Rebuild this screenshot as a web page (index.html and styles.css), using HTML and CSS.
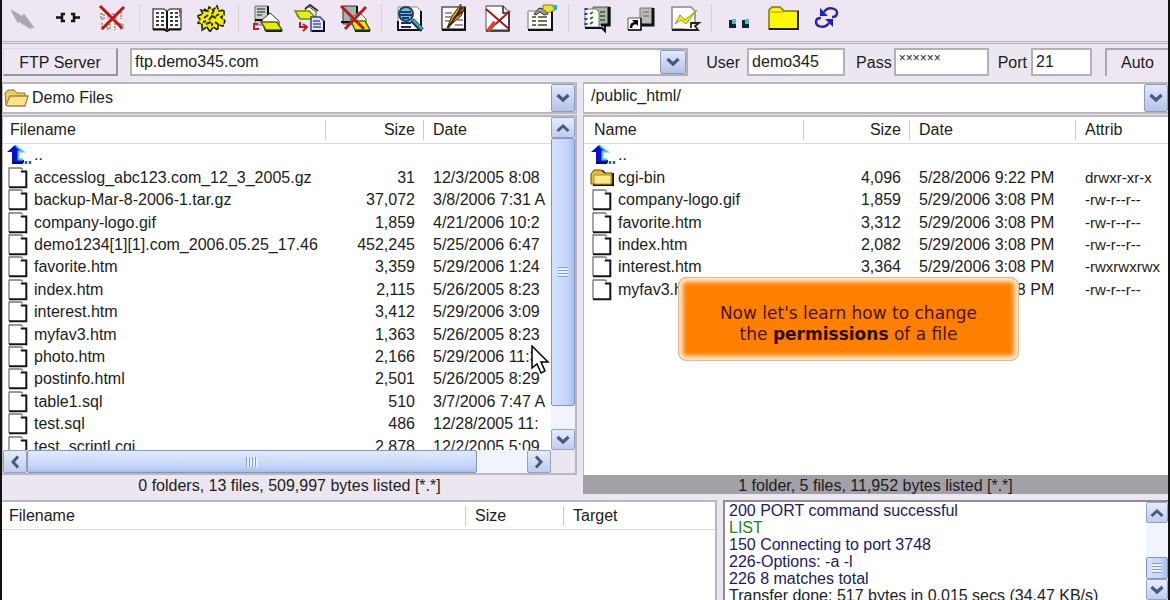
FILE: index.html
```html
<!DOCTYPE html>
<html lang="en">
<head>
<meta charset="utf-8">
<title>FTP Client</title>
<link rel="stylesheet" href="styles.css">
</head>
<body>
<svg class="defs" aria-hidden="true">
  <symbol id="down" viewBox="0 0 14 10"><path d="M1.500 2l5.500 5 5.500-5" fill="none" stroke="#48597f" stroke-width="3.200"/></symbol>
  <symbol id="up" viewBox="0 0 14 10"><path d="M1.500 8L7 3l5.500 5" fill="none" stroke="#48597f" stroke-width="3"/></symbol>
  <symbol id="left" viewBox="0 0 10 14"><path d="M8 1.500L3 7l5 5.500" fill="none" stroke="#48597f" stroke-width="3"/></symbol>
  <symbol id="right" viewBox="0 0 10 14"><path d="M2 1.500L7 7l-5 5.500" fill="none" stroke="#48597f" stroke-width="3"/></symbol>
  <symbol id="file" viewBox="0 0 24 22"><path d="M2 21V1h12l5 4v15z" fill="#fff"/><path d="M2 20V1h12l2 1.500" fill="none" stroke="#777" stroke-width="1.300"/><path d="M2 20.300h17.300V4.500h-5.500" fill="none" stroke="#151515" stroke-width="2"/></symbol>
  <symbol id="parent" viewBox="0 0 26 22"><path d="M9 1l8 7h-4v8h5v3H6V8H1z" fill="#0a10c8"/><path d="M10 2l7 5.500h-4.500v8H17" fill="none" stroke="#53c4e6" stroke-width="2"/><path d="M6 19h11" stroke="#001060" stroke-width="2"/><path d="M20 17v3m4-3v3" stroke="#276a9c" stroke-width="2.500"/></symbol>
  <symbol id="folder" viewBox="0 0 26 22"><path d="M3 19V7l3-4h7l3 3h8v13z" fill="#181000"/><path d="M1 17V7l3-4h7l3 3h8v11z" fill="#e7b93c" stroke="#6b4b08"/><path d="M4 17V8h17v9z" fill="#ffe78c" stroke="#b68924"/></symbol>
  <symbol id="openfolder" viewBox="0 0 26 22"><path d="M2 18L1 6l3-3h6l3 3h8v4" fill="#e9cc6a" stroke="#94731f"/><path d="M2 18L6 9h18l-3 10H4z" fill="#fbe391" stroke="#a8832c" stroke-width="1.300"/></symbol>
</svg>

<header class="toolbar" aria-label="Tools">
  <button aria-label="Quick connect"><svg viewBox="0 0 32 32"><path d="M4 9l10 6 2-2 9 12-4-1 1 2-11-7-1 1z" fill="#aaa6b3" stroke="#aaa6b3" stroke-width="1.500"/></svg></button>
  <button aria-label="Disconnect"><svg viewBox="0 0 32 32"><path d="M4 15.500h5m14 0h5" stroke="#111" stroke-width="2.500"/><path d="M13 12h-3v7h3M19 12h3v7h-3" fill="none" stroke="#111" stroke-width="2.500"/></svg></button>
  <button aria-label="Abort"><svg viewBox="0 0 32 32"><g fill="none" stroke="#8b9860" stroke-width="1.500" stroke-dasharray="2 1"><path d="M5 12h3v5H5zM12 10v7M17 12h3v5h-3zM25 10v7M6 21v7M11 22h3v5h-3zM19 21v7M24 22h3v5h-3z"/></g><path d="M4 4l22 22M28 5L6 27" stroke="#bd1518" stroke-width="3"/></svg></button>
  <i class="sep"></i>
  <button aria-label="Address book"><svg viewBox="0 0 32 32"><path d="M2 7h11l3 2 3-2h11v20H18l-2 2-2-2H2z" fill="#fff" stroke="#555" stroke-width="1.500"/><path d="M16 9v18M2 27.500h11l3 1.500 3-1.500h11" stroke="#111" stroke-width="2" fill="none"/><path d="M5 11h3m2 0h3M5 15h3m2 0h3M5 19h3m2 0h3M5 23h3m2 0h3M19 11h3m2 0h3M19 15h3m2 0h3M19 19h3m2 0h3M19 23h3m2 0h3" stroke="#363f46" stroke-width="2"/><path d="M29 8v3" stroke="#d23535" stroke-width="2"/><path d="M29 12v3" stroke="#3488bb" stroke-width="2"/></svg></button>
  <button aria-label="Preferences"><svg viewBox="0 0 32 32"><path d="M9 7l4 2 1-4 4 3 4-4 2 5 5-1v5l-3 2 4 4-2 5-5-1v5l-5-3-3 5-3-5-5 3v-6l-4-1 2-4-3-3 6-2-2-4 5 1z" fill="#f0ee08" stroke="#222200" stroke-width="1.600" stroke-dasharray="5 1"/><path d="M9 16l4-3M14 18l3-4 4 2M11 22l5-2M20 20l4 3M19 8l-2 4M24 12l-3 2M8 20l3-1M17 24v-3" stroke="#333300" stroke-width="2" fill="none"/></svg></button>
  <i class="sep"></i>
  <button aria-label="Upload"><svg viewBox="0 0 32 32"><path d="M5 4h13v19H5z" fill="#c9ccc8" stroke="#777"/><path d="M18 4v14M5 18h8" stroke="#111" stroke-width="2"/><path d="M7 7h8M7 10h8M7 13h5" stroke="#4b665e" stroke-width="1.500"/><path d="M12 18l8-7 9 8v10H15z" fill="#fff" stroke="#333"/><path d="M11 20h16l5 8H16z" fill="#e8e90d" stroke="#58621a" stroke-width="1.500"/><path d="M16 29h16" stroke="#152b09" stroke-width="2"/><path d="M8 22H4v5h5" fill="none" stroke="#ca1c25" stroke-width="2"/></svg></button>
  <button aria-label="Download"><svg viewBox="0 0 32 32"><path d="M4 15l-2-5 7 1 5-7 8 6v5z" fill="#fff" stroke="#4a5910"/><path d="M1 9h14l8 8H6z" fill="#e6ed20" stroke="#7c8411" stroke-width="1.500"/><path d="M11 7l5-4 8 6" fill="none" stroke="#333" stroke-width="2"/><path d="M17 15h9l4 4v10H17z" fill="#e1e4ff" stroke="#38447a" stroke-width="1.500"/><path d="M19 19h7m-7 3h8m-8 3h8" stroke="#4450a0" stroke-width="1.500"/><path d="M30 19v10H18" fill="none" stroke="#111" stroke-width="2"/><path d="M6 20v5h6m-3-3l4 3-4 4" fill="none" stroke="#b42020" stroke-width="2"/></svg></button>
  <button aria-label="Cancel transfer"><svg viewBox="0 0 32 32"><path d="M5 4h14v18H5z" fill="#9fb5ae" stroke="#333"/><path d="M19 4v14M3 20h10" stroke="#111" stroke-width="2"/><path d="M12 17l9-7 7 7v8z" fill="#fff" stroke="#555"/><path d="M13 19h14l5 9H17z" fill="#e8e80d" stroke="#58621a" stroke-width="1.500"/><path d="M17 29h15" stroke="#142f09" stroke-width="2"/><path d="M3 4l23 23M28 5L7 27" stroke="#b91c20" stroke-width="3"/></svg></button>
  <i class="sep"></i>
  <button aria-label="View"><svg viewBox="0 0 32 32"><path d="M5 5h19l4 4v19H5z" fill="#fff" stroke="#888"/><path d="M28 9v19H5v-9" fill="none" stroke="#111" stroke-width="2"/><path d="M8 17h8m-8 4h10m-10 4h10" stroke="#182a66" stroke-width="2"/><circle cx="13" cy="12" r="7" fill="#78bdd0" stroke="#17465c" stroke-width="2"/><path d="M7 10h11M7 13h12M9 16h7" stroke="#173a7c" stroke-width="2"/><path d="M19 18l10 10" stroke="#13323e" stroke-width="5"/><path d="M20 18l9 9" stroke="#30acb5" stroke-width="2.500"/></svg></button>
  <button aria-label="Edit"><svg viewBox="0 0 32 32"><path d="M5 5h23v22H5z" fill="#fff" stroke="#555" stroke-width="1.500"/><path d="M28 5v23H5" fill="none" stroke="#111" stroke-width="2"/><path d="M8 11h7m-7 4h6m-6 4h5m5 4h8M20 18h6" stroke="#777" stroke-width="1.500"/><path d="M10 26l5-12L24 2l-2 7 6-4-4 9-7 6z" fill="#d0aa20" stroke="#332500"/><path d="M11 26L25 5M17 16l9-7" stroke="#54181b" stroke-width="2"/></svg></button>
  <button aria-label="Delete"><svg viewBox="0 0 32 32"><path d="M5 4h17l6 6v18H5z" fill="#fff" stroke="#777" stroke-width="1.300"/><path d="M22 4v7h6M28 10v19H5" fill="none" stroke="#222" stroke-width="1.500"/><path d="M5 7l23 20M29 9L8 28" stroke="#aa1518" stroke-width="2"/><path d="M14 20l-7 9" stroke="#d5462b" stroke-width="4"/></svg></button>
  <button aria-label="Properties"><svg viewBox="0 0 32 32"><path d="M3 9h24v18H3z" fill="#fff" stroke="#777"/><path d="M27 9v19H3" fill="none" stroke="#111" stroke-width="2"/><path d="M7 15h4m2 0h9M7 19h4m2 0h9M7 23h4m2 0h9" stroke="#727263" stroke-width="2"/><path d="M9 12l5-6 5 1 4 5-4 1-4-3-4 3z" fill="#999" stroke="#333"/><path d="M18 3h10l2 5-7 3-5-4z" fill="#ece329" stroke="#85811a"/><path d="M27 3h5v5h-3z" fill="#36a9cc"/></svg></button>
  <i class="sep"></i>
  <button aria-label="Site log"><svg viewBox="0 0 32 32"><path d="M13 5h17v18H13z" fill="#aeb3ae" stroke="#555"/><path d="M29 5v18h-8" fill="none" stroke="#111" stroke-width="3"/><path d="M5 7h11l3 3v15H5z" fill="#fff" stroke="#777"/><path d="M5 26h17l3 3v-5" fill="none" stroke="#111" stroke-width="2"/><path d="M6 6v18" stroke="#283c90" stroke-width="3" stroke-dasharray="2 3"/><path d="M10 12l3-2m-3 7l3-2m-3 7l3-2" stroke="#526052" stroke-width="2"/><path d="M20 10h5m-5 4h5m-5 4h5" stroke="#4a7839" stroke-width="2"/></svg></button>
  <button aria-label="Shortcut"><svg viewBox="0 0 32 32"><path d="M16 6h13v17H16z" fill="#b9bab7" stroke="#777"/><path d="M29 6v17H17" fill="none" stroke="#111" stroke-width="3"/><path d="M19 10h6m-6 4h6" stroke="#666"/><path d="M4 16h13v12H4z" fill="#fff" stroke="#555"/><path d="M17 16v12H4" fill="none" stroke="#111" stroke-width="1.500"/><path d="M7 26c0-4 2-5 5-5" fill="none" stroke="#000" stroke-width="2.500"/><path d="M8 18h6v6z"/></svg></button>
  <button aria-label="Run script"><svg viewBox="0 0 32 32"><path d="M4 5h19l4 4v18H4z" fill="#fff" stroke="#888" stroke-width="1.500"/><path d="M4 28h26l-3-4 4-3h-8v5" fill="#fff" stroke="#222" stroke-width="1.800"/><path d="M7 22l5-9 5 5L29 8 18 22l-5-4z" fill="#eee91b" stroke="#99951a"/></svg></button>
  <i class="sep"></i>
  <button aria-label="Parent directory"><svg viewBox="0 0 32 32"><path d="M6 18h7v8H6zM19 18h7v8h-7z" fill="#082733"/><path d="M9 17h4v5H9zM22 17h4v5h-4z" fill="#52bfc5"/></svg></button>
  <button aria-label="New folder"><svg viewBox="0 0 32 32"><path d="M2 27V8l3-3h8l4 4h14v18z" fill="#fff700" stroke="#777321" stroke-width="1.500"/><path d="M31 9v18H2" fill="none" stroke="#222" stroke-width="2"/><path d="M4 10h13" stroke="#c9c235" stroke-width="2"/></svg></button>
  <button aria-label="Refresh"><svg viewBox="0 0 32 32"><path d="M13 10c4-6 13-4 13 1 0 3-2 4-5 4M18 21c-4 6-13 4-13-1 0-3 2-4 5-4" fill="none" stroke="#2d24a0" stroke-width="2.500"/><path d="M9 6v8h8zM22 25v-8h-8z" fill="#2020bd"/></svg></button>
</header>

<form class="connection">
  <button type="button" class="server">FTP Server</button>
  <div class="address"><input id="host" aria-label="Server address" value="ftp.demo345.com"><button type="button" class="drop" aria-label="Show servers"><svg><use href="#down"/></svg></button></div>
  <label for="user">User</label><input id="user" class="user" value="demo345">
  <label for="pass">Pass</label><input id="pass" class="pass" value="××××××">
  <label for="port">Port</label><input id="port" class="port" value="21">
  <button type="button" class="auto">Auto</button>
</form>

<main class="panes">
  <section class="pane local">
    <div class="combo"><svg class="icon"><use href="#openfolder"/></svg><select aria-label="Local folder"><option>Demo Files</option></select><span class="drop"><svg><use href="#down"/></svg></span></div>
    <div class="list scrolling">
      <div class="view">
        <table>
          <colgroup><col class="c-name"><col class="c-size"><col class="c-date"></colgroup>
          <thead><tr><th>Filename</th><th class="num">Size</th><th>Date</th></tr></thead>
          <tbody>
            <tr><td><svg class="icon"><use href="#parent"/></svg>..</td><td></td><td></td></tr>
            <tr><td><svg class="icon"><use href="#file"/></svg>accesslog_abc123.com_12_3_2005.gz</td><td class="num">31</td><td>12/3/2005 8:08</td></tr>
            <tr><td><svg class="icon"><use href="#file"/></svg>backup-Mar-8-2006-1.tar.gz</td><td class="num">37,072</td><td>3/8/2006 7:31 A</td></tr>
            <tr><td><svg class="icon"><use href="#file"/></svg>company-logo.gif</td><td class="num">1,859</td><td>4/21/2006 10:2</td></tr>
            <tr><td><svg class="icon"><use href="#file"/></svg>demo1234[1][1].com_2006.05.25_17.46</td><td class="num">452,245</td><td>5/25/2006 6:47</td></tr>
            <tr><td><svg class="icon"><use href="#file"/></svg>favorite.htm</td><td class="num">3,359</td><td>5/29/2006 1:24</td></tr>
            <tr><td><svg class="icon"><use href="#file"/></svg>index.htm</td><td class="num">2,115</td><td>5/26/2005 8:23</td></tr>
            <tr><td><svg class="icon"><use href="#file"/></svg>interest.htm</td><td class="num">3,412</td><td>5/29/2006 3:09</td></tr>
            <tr><td><svg class="icon"><use href="#file"/></svg>myfav3.htm</td><td class="num">1,363</td><td>5/26/2005 8:23</td></tr>
            <tr><td><svg class="icon"><use href="#file"/></svg>photo.htm</td><td class="num">2,166</td><td>5/29/2006 11:3</td></tr>
            <tr><td><svg class="icon"><use href="#file"/></svg>postinfo.html</td><td class="num">2,501</td><td>5/26/2005 8:29</td></tr>
            <tr><td><svg class="icon"><use href="#file"/></svg>table1.sql</td><td class="num">510</td><td>3/7/2006 7:47 A</td></tr>
            <tr><td><svg class="icon"><use href="#file"/></svg>test.sql</td><td class="num">486</td><td>12/28/2005 11:</td></tr>
            <tr><td><svg class="icon"><use href="#file"/></svg>test_scriptl.cgi</td><td class="num">2,878</td><td>12/2/2005 5:09</td></tr>
          </tbody>
        </table>
      </div>
      <div class="vbar"><button aria-label="Scroll up"><svg><use href="#up"/></svg></button><div class="track"><div class="thumb"></div></div><button aria-label="Scroll down"><svg><use href="#down"/></svg></button></div>
      <div class="hbar"><button aria-label="Scroll left"><svg><use href="#left"/></svg></button><div class="track"><div class="thumb"></div></div><button aria-label="Scroll right"><svg><use href="#right"/></svg></button></div>
    </div>
    <p class="status">0 folders, 13 files, 509,997 bytes listed [*.*]</p>
  </section>

  <section class="pane remote">
    <div class="combo"><select aria-label="Remote folder"><option>/public_html/</option></select><span class="drop"><svg><use href="#down"/></svg></span></div>
    <div class="list">
      <div class="view">
        <table>
          <colgroup><col class="c-name"><col class="c-size"><col class="c-date"><col class="c-attr"></colgroup>
          <thead><tr><th>Name</th><th class="num">Size</th><th>Date</th><th>Attrib</th></tr></thead>
          <tbody>
            <tr><td><svg class="icon"><use href="#parent"/></svg>..</td><td></td><td></td><td></td></tr>
            <tr><td><svg class="icon"><use href="#folder"/></svg>cgi-bin</td><td class="num">4,096</td><td>5/28/2006 9:22 PM</td><td class="attr">drwxr-xr-x</td></tr>
            <tr><td><svg class="icon"><use href="#file"/></svg>company-logo.gif</td><td class="num">1,859</td><td>5/29/2006 3:08 PM</td><td class="attr">-rw-r--r--</td></tr>
            <tr><td><svg class="icon"><use href="#file"/></svg>favorite.htm</td><td class="num">3,312</td><td>5/29/2006 3:08 PM</td><td class="attr">-rw-r--r--</td></tr>
            <tr><td><svg class="icon"><use href="#file"/></svg>index.htm</td><td class="num">2,082</td><td>5/29/2006 3:08 PM</td><td class="attr">-rw-r--r--</td></tr>
            <tr><td><svg class="icon"><use href="#file"/></svg>interest.htm</td><td class="num">3,364</td><td>5/29/2006 3:08 PM</td><td class="attr">-rwxrwxrwx</td></tr>
            <tr><td><svg class="icon"><use href="#file"/></svg>myfav3.htm</td><td class="num"></td><td>5/29/2006 3:08 PM</td><td class="attr">-rw-r--r--</td></tr>
          </tbody>
        </table>
      </div>
    </div>
    <p class="status active">1 folder, 5 files, 11,952 bytes listed [*.*]</p>
    <div class="callout">Now let's learn how to change<br>the <b>permissions</b> of a file</div>
  </section>
  <svg class="pointer" viewBox="0 0 20 30"><path d="M2 1v22l5-4 4 9 4-2-4-9h7z" fill="#fff" stroke="#000" stroke-width="1.500"/></svg>
</main>

<footer class="bottom">
  <section class="queue">
    <table>
      <colgroup><col class="q-name"><col class="q-size"><col></colgroup>
      <thead><tr><th>Filename</th><th>Size</th><th>Target</th></tr></thead>
    </table>
  </section>
  <section class="log">
    <div class="lines">
      <p>200 PORT command successful</p>
      <p class="cmd">LIST</p>
      <p>150 Connecting to port 3748</p>
      <p>226-Options: -a -l</p>
      <p>226 8 matches total</p>
      <p class="done">Transfer done: 517 bytes in 0.015 secs (34.47 KB/s)</p>
    </div>
    <div class="vbar"><button aria-label="Scroll log up"><svg><use href="#up"/></svg></button><div class="track end"><div class="thumb"></div></div><button aria-label="Scroll log down"><svg><use href="#down"/></svg></button></div>
  </section>
</footer>
</body>
</html>
```
FILE: styles.css
```css
* { box-sizing: border-box; }
body {
  margin: 0;
  height: 100vh;
  display: flex;
  flex-direction: column;
  overflow: hidden;
  background: #ece6f0;
  border: solid #111;
  border-width: 0 2px;
  color: #1c1c1c;
  font: 16px/20px "Liberation Sans", Arial, sans-serif;
}
button, input, select { font: inherit; color: inherit; margin: 0; padding: 0; border-radius: 0; }
p { margin: 0; }
.defs { display: none; }

.toolbar {
  flex: none;
  display: flex;
  align-items: center;
  height: 44px;
  padding-bottom: 5px;
  background: #eee6f2;
  border-bottom: 3px double #b2adb9;
}
.toolbar button { width: 44px; height: 32px; border: 0; background: none; padding: 0 6px; }
.toolbar svg { display: block; width: 32px; height: 32px; overflow: visible; }
.sep { width: 11px; height: 28px; flex: none; background: linear-gradient(#d8d3de, #d8d3de) center / 1px 100% no-repeat; }

.connection { flex: none; display: flex; align-items: center; height: 38px; padding: 1px 0 3px 1px; }
.connection input { height: 28px; border: 2px solid #b3b1b8; background: #fff; padding: 0 3px; min-width: 0; }
.connection label { padding-top: 2px; }
.server { width: 115px; height: 28px; padding-top: 2px; background: #eee6f2; border: solid; border-width: 1px 2px 2px 1px; border-color: #dcd7e2 #9793a3 #9793a3 #dcd7e2; }
.address { flex: 1; display: flex; margin: 0 18px 0 12px; border: 2px solid #b3b1b8; background: #fff; height: 28px; }
.connection .address input { flex: 1; height: 24px; border: 0; }
.drop { flex: none; width: 24px; display: flex; align-items: center; justify-content: center; background: linear-gradient(#e2e8fa, #b4c3ea); border: 1px solid #8e9bbf; border-radius: 2px; }
.address .drop { width: 26px; }
.drop svg, .vbar svg { width: 14px; height: 10px; }
.connection .user { width: 98px; margin: 0 11px 0 7px; }
.connection .pass { width: 95px; margin: 0 9px 0 2px; padding-bottom: 8px; font-size: 12px; }
.connection .port { width: 61px; margin: 0 13px 0 4px; }
.auto { width: 63px; height: 28px; background: #eee6f2; border: solid #aaa6b3; border-width: 2px 0 0 2px; }

.panes { flex: 1; min-height: 0; position: relative; display: grid; grid-template-columns: 575fr 585fr; gap: 6px; padding-bottom: 6px; }
.pane { display: flex; flex-direction: column; min-width: 0; min-height: 0; position: relative; }
.combo { flex: none; display: flex; height: 32px; background: #fff; border: 2px solid #bab8be; border-left-width: 1px; }
.combo select { flex: 1; min-width: 0; appearance: none; border: 0; background: none; padding-left: 2px; }
.remote .combo { border-right: 0; }
.remote .combo select { padding: 0 0 4px 7px; }
.icon { width: 26px; height: 22px; flex: none; vertical-align: middle; }
.combo .icon { align-self: center; margin-left: 1px; }

.list { flex: 1; min-height: 0; margin-top: 1px; background: #fff; border: 2px solid #bab8be; border-bottom-width: 0; border-left-width: 1px; }
.remote .list { border-right: 0; }
.scrolling { display: grid; grid-template-columns: 1fr 24px; grid-template-rows: 1fr 23px; border-bottom-width: 2px; background: #ece6f0; }
.view { overflow: hidden; background: #fff; min-width: 0; min-height: 0; }
table { width: 100%; table-layout: fixed; border-collapse: separate; border-spacing: 0; }
th { height: 27px; padding: 0 7px; text-align: left; font-weight: 400; border-bottom: 1px solid #dcdae0; background: linear-gradient(#ccc, #ccc) right / 1px 20px no-repeat; }
th:last-child { background: none; }
td { height: 22px; line-height: 22px; padding: 0; white-space: nowrap; }
tbody tr:nth-child(5n+2) td, tbody tr:nth-child(5n+4) td { height: 23px; line-height: 23px; }
td:first-child { padding-left: 3px; }
td:nth-child(n+3), th:nth-child(n+3) { padding-left: 9px; }
th.num, td.num { padding-right: 9px; text-align: right; }
td .icon { margin: -2px 2px 0 0; }
.local .c-name { width: 323px; }
.local .c-size { width: 98px; }
.remote .c-name { width: 220px; }
.remote .c-size { width: 106px; }
.remote .c-date { width: 166px; }
.remote td:first-child { padding-left: 6px; }
.remote th:first-child { padding-left: 10px; }
.attr { font-size: 15px; }

.vbar button, .hbar button { flex: none; display: flex; align-items: center; justify-content: center; background: linear-gradient(#e6ecfb, #bfcdee); border: 1px solid #94a2c6; border-radius: 2px; }
.track { flex: 1; background: #f2f4fd; min-width: 0; min-height: 0; }
.thumb { display: flex; align-items: center; justify-content: center; border: 1px solid #8295c2; border-radius: 2px; }
.thumb::after { content: ""; }
.vbar { display: flex; flex-direction: column; }
.vbar button { height: 21px; }
.vbar .thumb { height: 92%; background: linear-gradient(90deg, #d5e3fd, #c3d4f8 70%, #a9bee9); }
.vbar .thumb::after { width: 10px; height: 10px; background: repeating-linear-gradient(#899fc9 0 1px, #e7effd 1px 3px); }
.hbar { display: flex; }
.hbar button { width: 24px; }
.hbar svg { width: 10px; height: 14px; }
.hbar .thumb { width: 90%; height: 100%; background: linear-gradient(#e2ebff, #c4d5f9 70%, #a9bfea); }
.hbar .thumb::after { width: 12px; height: 10px; background: repeating-linear-gradient(90deg, #899fc9 0 1px, #e7effd 1px 3px); }

.status { flex: none; height: 19px; line-height: 21px; text-align: center; }
.active { background: #a3a1a7; }

.callout {
  position: absolute;
  left: 95px;
  top: 195px;
  width: 341px;
  padding: 25px 0 15px;
  text-align: center;
  color: #4a1500;
  font: 17px/21px "DejaVu Sans", Verdana, sans-serif;
  background: #ff8000;
  border: 1px solid #edb78b;
  border-radius: 8px;
  box-shadow: inset 0 0 4px 4px #ffe9d0;
}
.callout b { color: #300c00; }
.pointer { position: absolute; left: 528px; top: 263px; width: 20px; height: 30px; }

.bottom { flex: none; height: 100px; display: grid; grid-template-columns: 715fr 445fr; gap: 6px; }
.queue { background: #fff; border: 2px solid #bab8be; border-width: 2px 2px 0 0; min-width: 0; }
.queue th { height: 28px; padding-left: 9px; }
.q-name { width: 464px; }
.q-size { width: 98px; }
.queue th:first-child { padding-left: 7px; }
.log { display: flex; min-width: 0; overflow: hidden; background: #fff; border: 2px solid #8f8e97; border-width: 2px 0 0 2px; }
.lines { flex: 1; min-width: 0; padding-left: 4px; line-height: 17px; white-space: nowrap; color: #1d1964; }
.lines .cmd { color: #26811f; }
.lines .done { color: #1c1c1c; }
.log .vbar { width: 22px; }
.end { display: flex; flex-direction: column; justify-content: flex-end; }
.log .thumb { height: 22px; }
```
